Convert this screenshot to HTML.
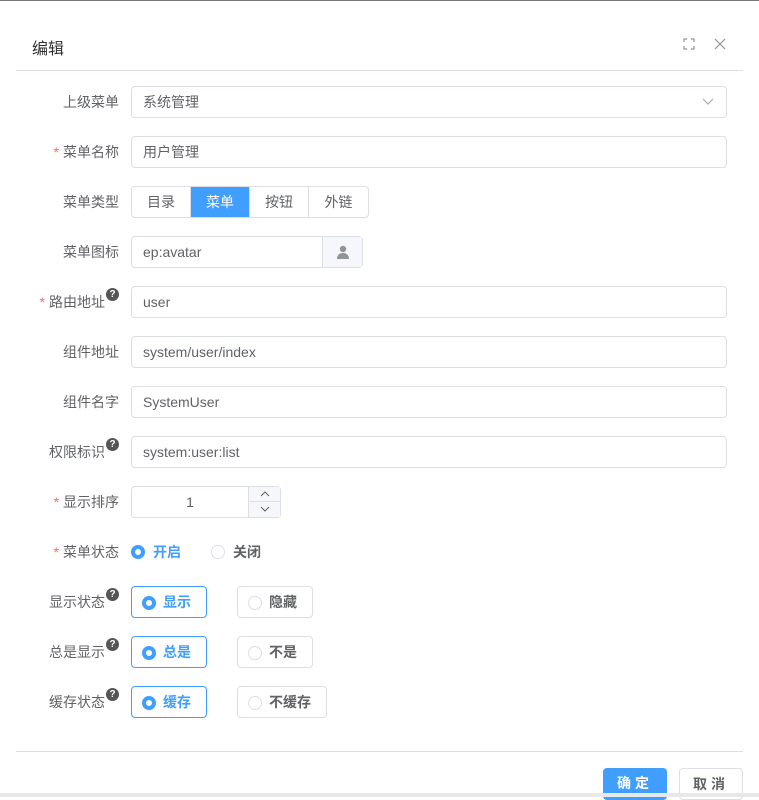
<!DOCTYPE html>
<html><head><meta charset="utf-8"><style>
*{box-sizing:border-box;margin:0;padding:0}
body{width:759px;height:797px;overflow:hidden;background:#fff;font-family:"Liberation Sans","Noto Sans CJK SC",sans-serif;font-size:14px;color:#606266;position:relative}
.topline{position:absolute;left:0;top:0;width:759px;height:1px;background:#777}
.botstrip{position:absolute;left:0;top:793px;width:759px;height:4px;background:#e8e8e8}
.title{position:absolute;left:32px;top:35px;font-size:16px;color:#303133}
.hr{position:absolute;left:16px;width:727px;height:1px;background:#dcdfe6}
.lbl{position:absolute;right:640px;font-size:14px;color:#606266;white-space:nowrap;line-height:32px}
.req{color:#f56c6c;margin-right:4px}
.q{display:inline-block;width:13px;height:13px;border-radius:50%;background:#555;color:#fff;font-size:10px;line-height:13px;text-align:center;font-weight:bold;vertical-align:top;margin-top:2px;margin-left:1px}
.inp{position:absolute;left:131px;width:596px;height:32px;border:1px solid #dcdfe6;border-radius:4px;padding-left:11px;line-height:30px;color:#606266;background:#fff}
.seg{position:absolute;left:131px;top:186px;height:32px;display:flex;border:1px solid #dcdfe6;border-radius:4px;overflow:hidden}
.seg div{width:59px;text-align:center;line-height:30px;border-right:1px solid #dcdfe6;color:#606266}
.seg div:last-child{border-right:none}
.seg .on{background:#409eff;color:#fff}
.rb{position:absolute;height:32px;border:1px solid #dcdfe6;border-radius:4px;line-height:30px;padding-left:31px;font-weight:bold;color:#606266}
.rb.on{border-color:#409eff;color:#409eff}
.dot{position:absolute;left:10px;top:9px;width:14px;height:14px;border-radius:50%;border:1px solid #dcdfe6;background:#fff}
.on .dot,.dot.on{border:4px solid #409eff}
.btn{position:absolute;top:768px;height:32px;border-radius:4px;text-align:center;line-height:30px;font-weight:bold;letter-spacing:4px}
</style></head><body>
<div class="topline"></div>
<div class="title">编辑</div>
<svg style="position:absolute;left:683px;top:38px" width="12" height="12" viewBox="0 0 12 12" fill="none" stroke="#909399" stroke-width="1.2"><path d="M1 4V1h3M8 1h3v3M11 8v3H8M4 11H1V8"/></svg>
<svg style="position:absolute;left:714px;top:38px" width="12" height="12" viewBox="0 0 12 12" stroke="#909399" stroke-width="1.2"><path d="M1 1l10 10M11 1L1 11"/></svg>
<div class="hr" style="top:70px"></div>

<div class="lbl" style="top:86px">上级菜单</div>
<div class="inp" style="top:86px">系统管理<svg style="position:absolute;right:12px;top:11px" width="12" height="8" viewBox="0 0 12 8" fill="none" stroke="#a8abb2" stroke-width="1.2"><path d="M1 1l5 5 5-5"/></svg></div>

<div class="lbl" style="top:136px"><span class="req">*</span>菜单名称</div>
<div class="inp" style="top:136px">用户管理</div>

<div class="lbl" style="top:186px">菜单类型</div>
<div class="seg"><div>目录</div><div class="on">菜单</div><div>按钮</div><div>外链</div></div>

<div class="lbl" style="top:236px">菜单图标</div>
<div class="inp" style="top:236px;width:232px">ep:avatar<div style="position:absolute;right:0;top:0;width:40px;height:30px;background:#f5f7fa;border-left:1px solid #dcdfe6"><svg style="position:absolute;left:13px;top:8px" width="14" height="14" viewBox="0 0 14 14" fill="#909399"><circle cx="7" cy="4" r="3.2"/><path d="M1 14c0-4 2.5-6 6-6s6 2 6 6z"/></svg></div></div>

<div class="lbl" style="top:286px"><span class="req">*</span>路由地址<span class="q">?</span></div>
<div class="inp" style="top:286px">user</div>

<div class="lbl" style="top:336px">组件地址</div>
<div class="inp" style="top:336px">system/user/index</div>

<div class="lbl" style="top:386px">组件名字</div>
<div class="inp" style="top:386px">SystemUser</div>

<div class="lbl" style="top:436px">权限标识<span class="q">?</span></div>
<div class="inp" style="top:436px">system:user:list</div>

<div class="lbl" style="top:486px"><span class="req">*</span>显示排序</div>
<div class="inp" style="top:486px;width:150px;padding:0;text-align:center;padding-right:32px">1<div style="position:absolute;right:0;top:0;width:32px;height:30px;background:#f5f7fa;border-left:1px solid #dcdfe6"><div style="height:15px;border-bottom:1px solid #dcdfe6;position:relative"><svg style="position:absolute;left:11px;top:4px" width="10" height="6" viewBox="0 0 10 6" fill="none" stroke="#606266" stroke-width="1"><path d="M1 5l4-4 4 4"/></svg></div><div style="position:relative;height:15px"><svg style="position:absolute;left:11px;top:4px" width="10" height="6" viewBox="0 0 10 6" fill="none" stroke="#606266" stroke-width="1"><path d="M1 1l4 4 4-4"/></svg></div></div></div>

<div class="lbl" style="top:536px"><span class="req">*</span>菜单状态</div>
<div class="dot on" style="left:131px;top:545px"></div><div style="position:absolute;left:153px;top:536px;line-height:32px;color:#409eff;font-weight:bold">开启</div>
<div class="dot" style="left:211px;top:545px"></div><div style="position:absolute;left:233px;top:536px;line-height:32px;font-weight:bold">关闭</div>

<div class="lbl" style="top:586px">显示状态<span class="q">?</span></div>
<div class="rb on" style="left:131px;top:586px;width:76px"><span class="dot"></span>显示</div>
<div class="rb" style="left:237px;top:586px;width:76px"><span class="dot"></span>隐藏</div>

<div class="lbl" style="top:636px">总是显示<span class="q">?</span></div>
<div class="rb on" style="left:131px;top:636px;width:76px"><span class="dot"></span>总是</div>
<div class="rb" style="left:237px;top:636px;width:76px"><span class="dot"></span>不是</div>

<div class="lbl" style="top:686px">缓存状态<span class="q">?</span></div>
<div class="rb on" style="left:131px;top:686px;width:76px"><span class="dot"></span>缓存</div>
<div class="rb" style="left:237px;top:686px;width:90px"><span class="dot"></span>不缓存</div>

<div class="hr" style="top:751px"></div>
<div class="btn" style="left:603px;width:64px;background:#409eff;color:#fff">确定</div>
<div class="btn" style="left:679px;width:64px;border:1px solid #dcdfe6;color:#606266;background:#fff">取消</div>
<div class="botstrip"></div>
</body></html>
